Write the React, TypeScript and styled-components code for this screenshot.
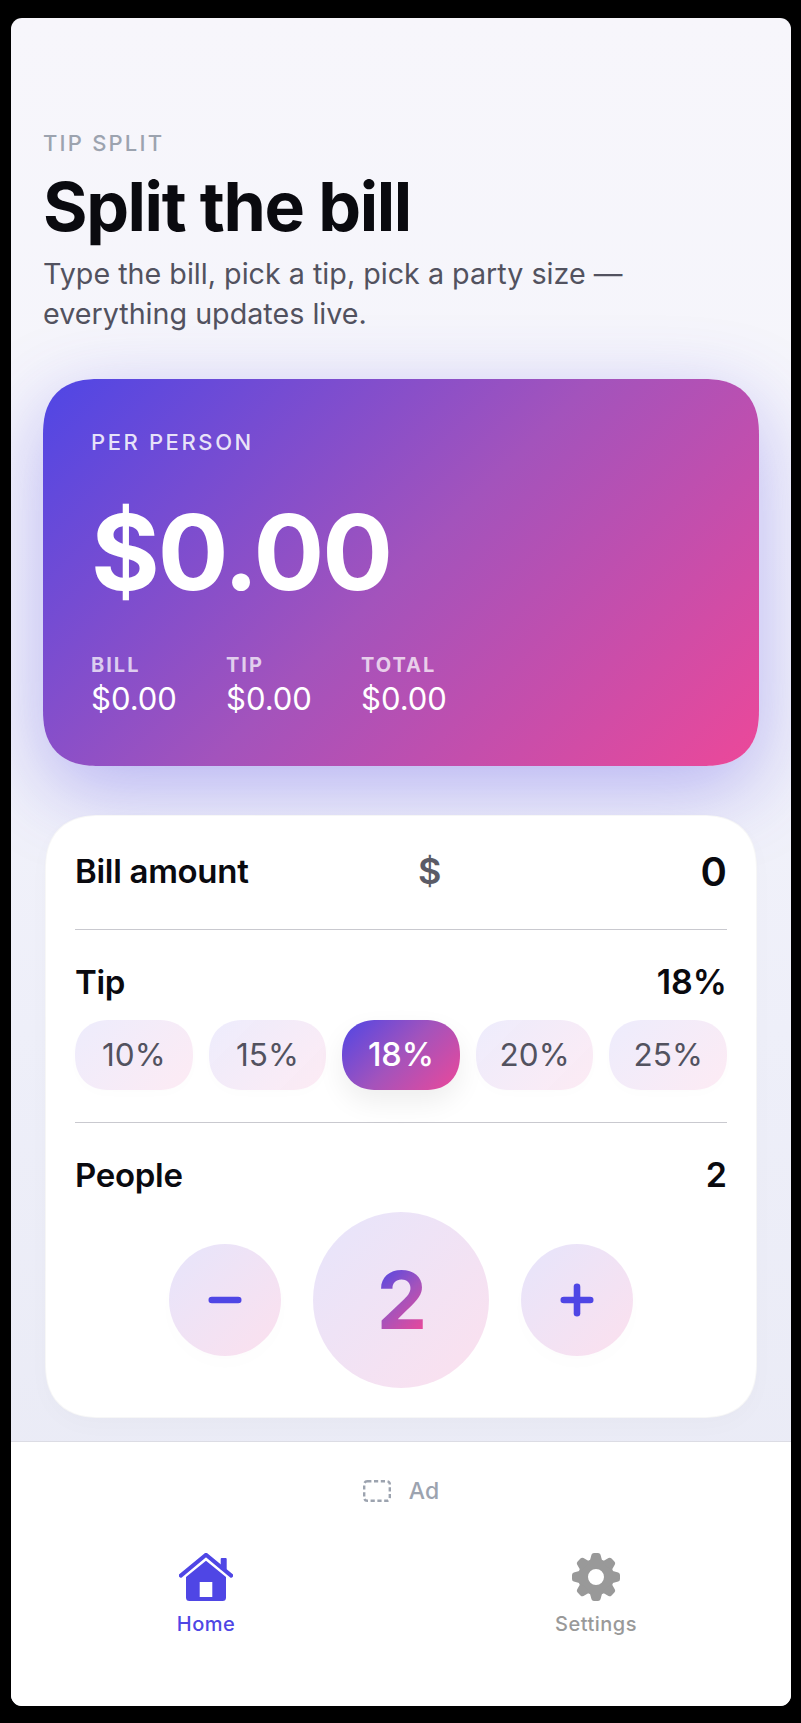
import React from "react";
import styled, { createGlobalStyle } from "styled-components";

const grad = "linear-gradient(135deg, #4f46e5 0%, #a353bc 50%, #ec4899 100%)";
const pillTint = "linear-gradient(135deg, rgba(79,70,229,0.1) 0%, rgba(236,72,153,0.11) 100%)";
const roundTint = "linear-gradient(135deg, rgba(79,70,229,0.14) 0%, rgba(236,72,153,0.17) 100%)";

const Global = createGlobalStyle`
  html, body { margin: 0; padding: 0; background: #000; }
  #root { width: 801px; height: 1723px; }
  * { box-sizing: border-box; }
`;
const Device = styled.div`
  width: 801px; height: 1723px; padding: 18px 10px 17px 11px; background: #000;
  font-family: Inter, "Liberation Sans", sans-serif;
`;
const Screen = styled.div`
  height: 100%; display: flex; flex-direction: column; border-radius: 11px; overflow: hidden;
  background: linear-gradient(180deg, #f7f6fb 0%, #f5f5fb 25%, #eeeff9 60%, #e8e9f4 100%);
`;
const Main = styled.main`
  flex: 1; padding: 111px 32px 0; display: flex; flex-direction: column;
`;
const Eyebrow = styled.div`
  font-size: 22px; line-height: 28px; font-weight: 500; letter-spacing: 2.2px; color: #9ca3af;
`;
const Title = styled.h1`
  margin: 10.5px 0 0; font-size: 68px; line-height: 76px; font-weight: 700; letter-spacing: -1.4px; color: #0a0a0f;
`;
const Sub = styled.p`
  margin: 10px 0 0; font-size: 28.7px; line-height: 40px; color: #52525f; width: 640px;
`;
const Hero = styled.section`
  margin-top: 45px; height: 387px; padding: 49px 48px 0; border-radius: 56px; corner-shape: superellipse(1.3);
  background: ${grad}; color: #fff; box-shadow: 0 24px 80px rgba(79,70,229,0.36);
  display: flex; flex-direction: column;
`;
const HeroLabel = styled.div`
  font-size: 22px; line-height: 28px; font-weight: 500; letter-spacing: 2.6px; color: rgba(255,255,255,0.85);
`;
const Amount = styled.div`
  margin-top: 33px; font-size: 105px; line-height: 126px; font-weight: 700; letter-spacing: -2px;
`;
const Stats = styled.div`
  margin-top: 39px; display: flex;
`;
const Stat = styled.div`
  width: 135px; display: flex; flex-direction: column;
`;
const StatLabel = styled.span`
  font-size: 20px; line-height: 22px; font-weight: 700; letter-spacing: 2px; color: rgba(255,255,255,0.72);
`;
const StatValue = styled.span`
  margin-top: 5px; font-size: 31px; line-height: 36px; font-weight: 400;
`;
const Card = styled.section`
  margin: 49px 2px 0; height: 603px; padding: 0 29px; border-radius: 56px; corner-shape: superellipse(1.3);
  background: #fff; box-shadow: 0 8px 24px rgba(0,0,0,0.02); border: 1px solid rgba(0,0,0,0.03);
  display: flex; flex-direction: column;
`;
const Section = styled.div<{ $h: number; $last?: boolean }>`
  height: ${p => p.$h}px; flex-shrink: 0; display: flex; flex-direction: column;
  border-bottom: ${p => (p.$last ? "none" : "1px solid #c9c9cf")};
`;
const BillRow = styled.div`
  height: 111px; display: grid; grid-template-columns: 343px auto 1fr; align-items: center;
`;
const RowTitle = styled.div`
  font-size: 33px; line-height: 40px; font-weight: 600; letter-spacing: -0.3px; color: #0a0a0f;
`;
const Currency = styled.div`
  font-size: 36px; font-weight: 600; color: #5b5b66;
`;
const BillValue = styled.div`
  font-size: 40px; font-weight: 600; color: #0a0a0f; text-align: right;
`;
const HeadRow = styled.div`
  padding-top: 32px; display: flex; justify-content: space-between; align-items: center; height: 72px;
`;
const RowValue = styled.div`
  font-size: 34px; line-height: 40px; font-weight: 600; color: #0a0a0f;
`;
const Pills = styled.div`
  margin-top: 18px; display: grid; grid-template-columns: repeat(5, 1fr); gap: 16px;
`;
const Pill = styled.div<{ $on?: boolean }>`
  height: 70px; border-radius: 35px; corner-shape: superellipse(1.2); display: flex; align-items: center; justify-content: center;
  font-size: ${p => (p.$on ? 32.5 : 31.5)}px; font-weight: ${p => (p.$on ? 500 : 400)}; color: ${p => (p.$on ? "#fff" : "#52525f")};
  background: ${p => (p.$on ? grad : pillTint)};
  box-shadow: ${p => (p.$on ? "0 12px 28px rgba(0,0,0,0.07)" : "0 4px 12px rgba(0,0,0,0.01)")};
`;
const Stepper = styled.div`
  margin-top: 17px; display: flex; justify-content: center; align-items: center; gap: 32px;
`;
const Round = styled.div`
  width: 112px; height: 112px; border-radius: 50%; background: ${roundTint}; color: #4f46e5;
  display: flex; align-items: center; justify-content: center; box-shadow: 0 8px 20px rgba(0,0,0,0.01);
`;
const Count = styled.div`
  width: 176px; height: 176px; border-radius: 50%; background: ${roundTint};
  display: flex; align-items: center; justify-content: center;
`;
const CountText = styled.span`
  display: block; font-size: 80px; line-height: 62px; font-weight: 700; letter-spacing: -2px; background: ${grad};
  -webkit-background-clip: text; background-clip: text; color: transparent;
`;
const Footer = styled.footer`
  height: 265px; flex-shrink: 0; background: #fff; border-top: 1px solid #dcdce4; display: flex; flex-direction: column;
`;
const AdRow = styled.div`
  height: 98px; display: flex; align-items: center; justify-content: center; gap: 18px;
  font-size: 23px; font-weight: 500; color: #9ca3af;
`;
const Tabs = styled.nav`
  display: grid; grid-template-columns: 1fr 1fr; margin-top: 13px;
`;
const Tab = styled.div<{ $on?: boolean }>`
  display: flex; flex-direction: column; align-items: center; gap: 9px;
  color: ${p => (p.$on ? "#4f46e5" : "#999")}; font-size: 20px; line-height: 28px; font-weight: 500; letter-spacing: 0.5px;
`;

const HomeIcon = () => (
  <svg width="54" height="48" viewBox="0 0 54 48" fill="currentColor">
    <path d="M1.8 22.6 27 1.8 52.2 22.6" fill="none" stroke="currentColor" strokeWidth="4" strokeLinecap="round" strokeLinejoin="round" />
    <rect x="41.7" y="5" width="6" height="12" rx="1" />
    <path fillRule="evenodd" d="M27 7.8 47 24V44.5A3.5 3.5 0 0 1 43.5 48H10.5A3.5 3.5 0 0 1 7 44.5V24ZM20.7 29V44H33.3V29Z" />
  </svg>
);

const GearIcon = () => (
  <svg width="48" height="48" viewBox="0 0 48 48" fill="currentColor">
    <circle cx="24" cy="24" r="13" fill="none" stroke="currentColor" strokeWidth="10" />
    {[0, 45, 90, 135, 180, 225, 270, 315].map(a => (
      <path key={a} transform={`rotate(${a} 24 24)`} d="M17.5 9 19.5 1.8Q20 0 22 0H26Q28 0 28.5 1.8L30.5 9Z" />
    ))}
  </svg>
);

const people = 2;
const tips = [10, 15, 18, 20, 25];

export default function App() {
  return (
    <Device>
      <Global />
      <Screen>
        <Main>
          <Eyebrow>TIP SPLIT</Eyebrow>
          <Title>Split the bill</Title>
          <Sub>Type the bill, pick a tip, pick a party size — everything updates live.</Sub>
          <Hero>
            <HeroLabel>PER PERSON</HeroLabel>
            <Amount>$0.00</Amount>
            <Stats>
              {["BILL", "TIP", "TOTAL"].map(l => (
                <Stat key={l}>
                  <StatLabel>{l}</StatLabel>
                  <StatValue>$0.00</StatValue>
                </Stat>
              ))}
            </Stats>
          </Hero>
          <Card>
            <Section $h={114}>
              <BillRow>
                <RowTitle>Bill amount</RowTitle>
                <Currency>$</Currency>
                <BillValue>0</BillValue>
              </BillRow>
            </Section>
            <Section $h={193}>
              <HeadRow>
                <RowTitle>Tip</RowTitle>
                <RowValue>18%</RowValue>
              </HeadRow>
              <Pills>
                {tips.map(t => (
                  <Pill key={t} $on={t === 18}>{t}%</Pill>
                ))}
              </Pills>
            </Section>
            <Section $h={294} $last>
              <HeadRow>
                <RowTitle>People</RowTitle>
                <RowValue>{people}</RowValue>
              </HeadRow>
              <Stepper>
                <Round>
                  <svg width="36" height="36" viewBox="0 0 36 36"><rect x="1.5" y="14.7" width="33" height="6.6" rx="3.3" fill="currentColor" /></svg>
                </Round>
                <Count><CountText>{people}</CountText></Count>
                <Round>
                  <svg width="36" height="36" viewBox="0 0 36 36"><rect x="1.5" y="14.7" width="33" height="6.6" rx="3.3" fill="currentColor" /><rect x="14.7" y="1.5" width="6.6" height="33" rx="3.3" fill="currentColor" /></svg>
                </Round>
              </Stepper>
            </Section>
          </Card>
        </Main>
        <Footer>
          <AdRow>
            <svg width="28" height="22" viewBox="0 0 28 22"><rect x="1.2" y="1.2" width="25.6" height="19.6" rx="3" fill="none" stroke="#9ca3af" strokeWidth="2.4" strokeDasharray="4.2 2.6" /></svg>
            Ad
          </AdRow>
          <Tabs>
            <Tab $on><HomeIcon />Home</Tab>
            <Tab><GearIcon />Settings</Tab>
          </Tabs>
        </Footer>
      </Screen>
    </Device>
  );
}
